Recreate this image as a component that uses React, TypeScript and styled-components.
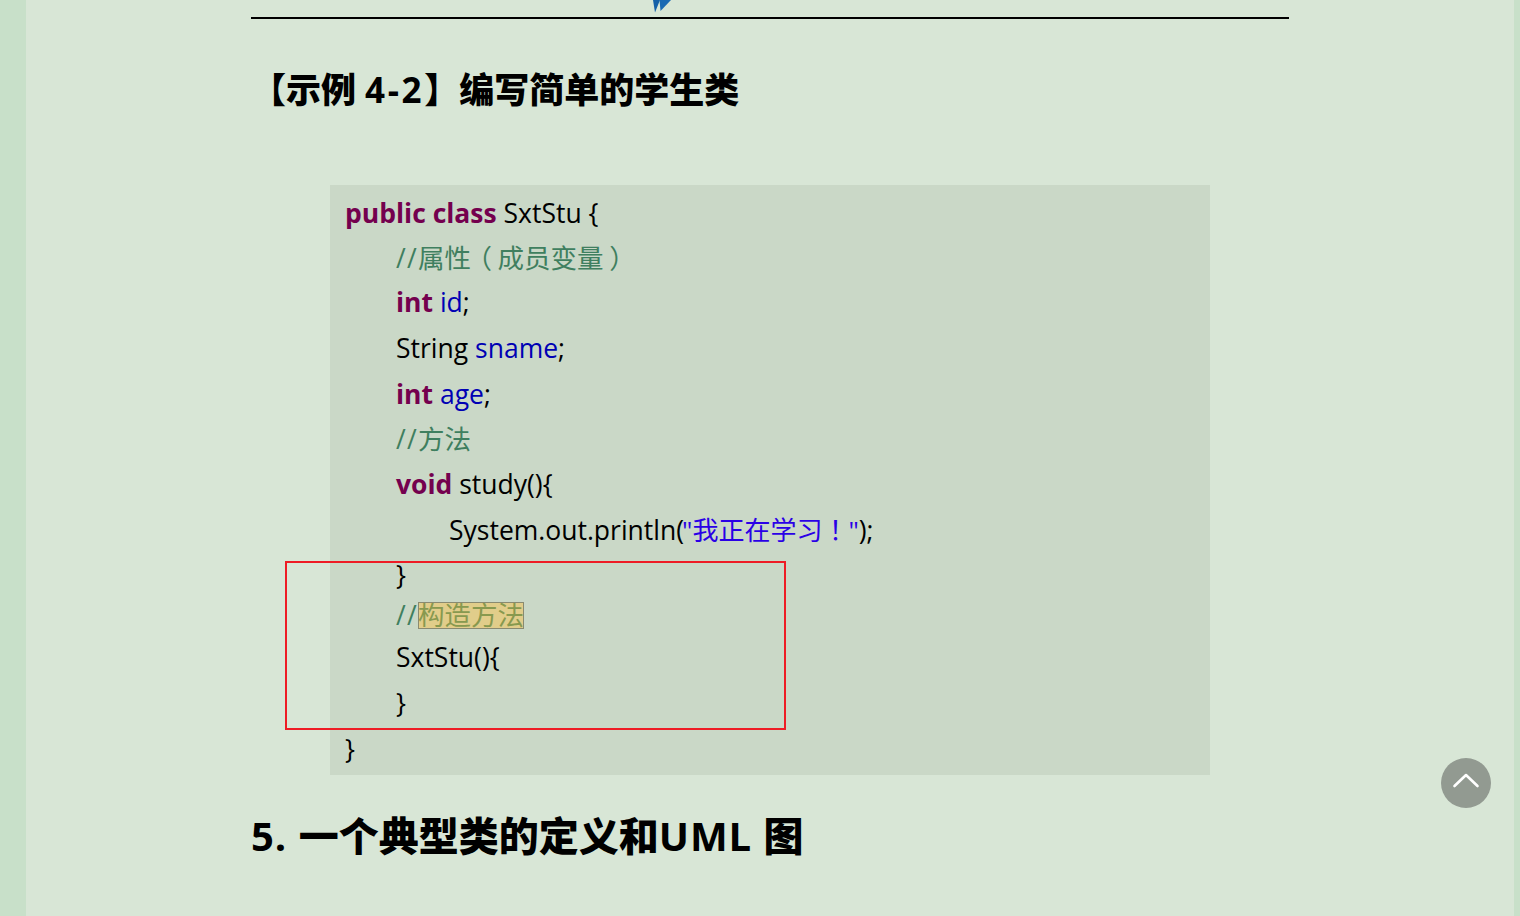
import * as React from 'react'
import styled, { createGlobalStyle } from 'styled-components'

const Color = {
  Side: '#c8e0c9',
  Page: '#d8e6d6',
  Code: '#cad8c7',
  Keyword: '#74004e',
  Field: '#0000b4',
  Comment: '#3f7f5f',
  Str: '#2a00e6',
}

const GlobalStyle = createGlobalStyle`
  html, body {
    margin: 0;
    height: 100%;
    overflow: hidden;
  }
  body {
    font-family: "Open Sans", "Noto Sans CJK SC", sans-serif;
  }
`
const Wrapper = styled.div`
  display: flex;
  height: 916px;
  background: ${Color.Page};
  overflow: hidden;
`
const Side = styled.div<{ $narrow?: boolean }>`
  flex: 0 0 ${p => (p.$narrow ? '6px' : '26px')};
  background: ${Color.Side};
`
const Main = styled.main`
  flex: 1;
  display: flex;
  justify-content: center;
`
const Article = styled.article`
  width: 1038px;
`
const LogoRow = styled.div`
  height: 17px;
  padding-left: 401px;
  svg {
    display: block;
  }
`
const Rule = styled.div`
  height: 2px;
  background: #000;
`
const Example = styled.h3`
  margin: 47px 0 0;
  height: 47px;
  line-height: 47px;
  font-size: 35px;
  font-weight: 800;
  color: #000;
  white-space: nowrap;
`
const Latin = styled.span<{ $spacing: number }>`
  font-weight: 700;
  letter-spacing: ${p => p.$spacing}px;
`
const CodeArea = styled.div`
  position: relative;
  margin: 72px 79px 0;
`
const CodeBlock = styled.div`
  background: ${Color.Code};
  padding: 5px 15px 0;
  height: 590px;
  box-sizing: border-box;
  font-size: 26.5px;
  color: #000;
`
const CodeLine = styled.div<{ $h: number; $indent: number }>`
  height: ${p => p.$h}px;
  line-height: ${p => p.$h}px;
  padding-left: ${p => p.$indent}px;
  white-space: nowrap;
`
const Kw = styled.b`
  color: ${Color.Keyword};
`
const Fd = styled.span`
  color: ${Color.Field};
`
const Cm = styled.span`
  color: ${Color.Comment};
`
const Slashes = styled.span`
  letter-spacing: 1.3px;
`
const St = styled.span`
  color: ${Color.Str};
  font-size: 26px;
  margin-left: -2px;
`
const Punct = styled.span`
  display: inline-block;
  width: 1em;
  text-align: center;
  font-feature-settings: "palt";
`
const Mark = styled.span`
  display: inline-block;
  height: 27px;
  line-height: 27px;
  background: #e1cd8a;
  color: #88994f;
  outline: 1px solid #8a8a70;
  outline-offset: -1px;
`
const RedBox = styled.div`
  position: absolute;
  left: -45px;
  top: 376px;
  width: 501px;
  height: 169px;
  box-sizing: border-box;
  border: 2px solid #ee1c25;
`
const Heading = styled.h2`
  margin: 36px 0 0;
  height: 50px;
  line-height: 50px;
  font-size: 40px;
  font-weight: 800;
  color: #000;
  white-space: nowrap;
`
const TopButton = styled.button`
  position: absolute;
  left: 1441px;
  top: 758px;
  width: 50px;
  height: 50px;
  padding: 0;
  border: 0;
  border-radius: 50%;
  background: #929a91;
  display: flex;
  align-items: center;
  justify-content: center;
`

const lines = [
  { h: 46, indent: 0, content: <><Kw>public class</Kw> SxtStu {'{'}</> },
  { h: 44, indent: 51, content: <Cm><Slashes>//</Slashes>属性<Punct>（</Punct>成员变量<Punct>）</Punct></Cm> },
  { h: 45, indent: 51, content: <><Kw>int</Kw> <Fd>id</Fd>;</> },
  { h: 46, indent: 51, content: <>String <Fd>sname</Fd>;</> },
  { h: 46, indent: 51, content: <><Kw>int</Kw> <Fd>age</Fd>;</> },
  { h: 44, indent: 51, content: <Cm><Slashes>//</Slashes>方法</Cm> },
  { h: 46, indent: 51, content: <><Kw>void</Kw> study(){'{'}</> },
  { h: 46, indent: 104, content: <>System.out.println(<St>"我正在学习<Punct>！</Punct>"</St>);</> },
  { h: 44, indent: 51, content: <>{'}'}</> },
  { h: 37, indent: 51, content: <Cm><Slashes>//</Slashes><Mark>构造方法</Mark></Cm> },
  { h: 46, indent: 51, content: <>SxtStu(){'{'}</> },
  { h: 47, indent: 51, content: <>{'}'}</> },
  { h: 45, indent: 0, content: <>{'}'}</> },
]

const App = () => (
  <Wrapper>
    <GlobalStyle />
    <Side />
    <Main>
      <Article>
        <LogoRow>
          <svg width="20" height="13" viewBox="0 0 20 13">
            <path d="M1 0 L3 12.5 L8 0 Z" fill="#1560a8" />
            <path d="M7.5 0 L8.5 11 L19 0 Z" fill="#1a6ab3" />
          </svg>
        </LogoRow>
        <Rule />
        <Example>【示例 <Latin $spacing={2.6}>4-2</Latin>】编写简单的学生类</Example>
        <CodeArea>
          <CodeBlock>
            {lines.map((line, i) => (
              <CodeLine key={i} $h={line.h} $indent={line.indent}>
                {line.content}
              </CodeLine>
            ))}
          </CodeBlock>
          <RedBox />
        </CodeArea>
        <Heading><Latin $spacing={1}>5. </Latin>一个典型类的定义和<Latin $spacing={1}>UML </Latin>图</Heading>
      </Article>
    </Main>
    <Side $narrow />
    <TopButton>
      <svg width="30" height="20" viewBox="0 0 30 20" fill="none">
        <path d="M3.5 13 L15 2 L26.5 13" stroke="#fff" strokeWidth="2.6" strokeLinecap="round" strokeLinejoin="round" />
      </svg>
    </TopButton>
  </Wrapper>
)

export default App
